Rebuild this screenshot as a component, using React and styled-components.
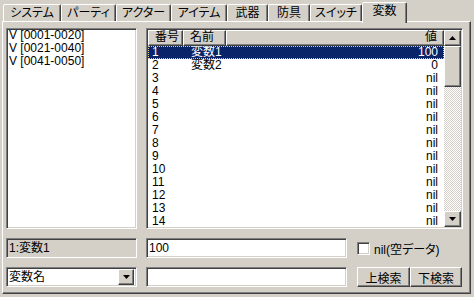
import React from 'react';
import styled, { createGlobalStyle, css } from 'styled-components';

const FACE = '#d4d0c8';

const GlobalStyle = createGlobalStyle`
  html, body { margin: 0; padding: 0; background: ${FACE}; }
  body {
    font-family: "Liberation Sans", "Noto Sans CJK JP", sans-serif;
    font-size: 12px;
    color: #000;
    font-feature-settings: "palt";
  }
  * { box-sizing: border-box; }
`;

const sunken = css`
  border: 1px solid;
  border-color: #808080 #ffffff #ffffff #808080;
  box-shadow: inset 1px 1px 0 #404040, inset -1px -1px 0 ${FACE};
`;

const raised = css`
  border: 1px solid;
  border-color: #ffffff #404040 #404040 #ffffff;
  box-shadow: inset -1px -1px 0 #808080;
  background: ${FACE};
`;

const Window = styled.div`
  width: 474px;
  height: 297px;
  padding: 0 3px 3px 2px;
  background: ${FACE};
  display: flex;
  flex-direction: column;
  overflow: hidden;
`;

const TabStrip = styled.div`
  display: flex;
  align-items: flex-end;
  height: 21px;
  padding-left: 1px;
  flex: none;
`;

const Tab = styled.div`
  width: ${(p) => p.$w}px;
  height: ${(p) => (p.$selected ? 21 : 17)}px;
  margin-bottom: ${(p) => (p.$selected ? -2 : 0)}px;
  border: 1px solid;
  border-bottom: none;
  border-color: #ffffff #404040 transparent #ffffff;
  border-radius: 2px 2px 0 0;
  box-shadow: inset -1px 0 0 #808080;
  background: ${FACE};
  display: flex;
  justify-content: center;
  padding-top: 2px;
  line-height: 13px;
  white-space: nowrap;
  ${(p) => p.$selected && css`position: relative; z-index: 1;`}
`;

const Panel = styled.div`
  flex: 1;
  border: 1px solid;
  border-color: #ffffff #404040 #404040 #ffffff;
  box-shadow: inset -1px -1px 0 #808080;
  display: grid;
  grid-template-columns: 131px 317px;
  grid-template-rows: 201px 20px 20px;
  column-gap: 9px;
  row-gap: 9px;
  padding: 6px 7px 6px 3px;
`;

const ListBox = styled.div`
  ${sunken};
  background: #fff;
  padding: 0 2px;
  line-height: 13px;
  overflow: hidden;
`;

const ListItem = styled.div`
  height: 13px;
  white-space: nowrap;
`;

const ListView = styled.div`
  ${sunken};
  background: #fff;
  padding: 1px;
  display: flex;
  overflow: hidden;
`;

const ViewBody = styled.div`
  flex: 1;
  display: flex;
  flex-direction: column;
  overflow: hidden;
`;

const HeaderRow = styled.div`
  display: flex;
  height: 16px;
  flex: none;
`;

const HeaderCell = styled.div`
  ${raised};
  width: ${(p) => p.$w}px;
  padding: 0 6px;
  line-height: 13px;
  text-align: ${(p) => p.$align || 'left'};
  white-space: nowrap;
`;

const Row = styled.div`
  display: flex;
  height: 13px;
  line-height: 13px;
  flex: none;
  white-space: nowrap;
  ${(p) =>
    p.$selected &&
    css`
      background: #0a246a;
      color: #fff;
      outline: 1px dotted #e8cf7a;
      outline-offset: -1px;
    `}
`;

const Cell = styled.div`
  width: ${(p) => p.$w}px;
  padding-left: ${(p) => p.$pl || 0}px;
  padding-right: ${(p) => p.$pr || 0}px;
  text-align: ${(p) => p.$align || 'left'};
  overflow: hidden;
`;

const ScrollBar = styled.div`
  width: 17px;
  flex: none;
  display: flex;
  flex-direction: column;
`;

const ScrollButton = styled.div`
  ${raised};
  height: ${(p) => p.$h || 16}px;
  flex: none;
  display: flex;
  align-items: center;
  justify-content: center;
`;

const Track = styled.div`
  flex: 1;
  background-color: #fff;
  background-image: repeating-conic-gradient(${FACE} 0 25%, #ffffff 0 50%);
  background-size: 2px 2px;
`;

const FieldRow = styled.div`
  display: flex;
  align-items: center;
  gap: 10px;
`;

const TextField = styled.div`
  ${sunken};
  width: ${(p) => p.$w || 131}px;
  height: 20px;
  background: ${(p) => (p.$readonly ? FACE : '#fff')};
  padding: 0 2px;
  line-height: 18px;
  white-space: nowrap;
  flex: none;
`;

const Combo = styled.div`
  ${sunken};
  width: 131px;
  height: 20px;
  background: #fff;
  padding: 2px;
  display: flex;
  align-items: center;
  justify-content: space-between;
  line-height: 16px;
`;

const ComboButton = styled.div`
  ${raised};
  width: 16px;
  height: 16px;
  display: flex;
  align-items: center;
  justify-content: center;
`;

const CheckLabel = styled.label`
  display: flex;
  align-items: center;
  gap: 4px;
  white-space: nowrap;
`;

const CheckBox = styled.span`
  ${sunken};
  width: 13px;
  height: 13px;
  background: #fff;
  display: inline-block;
`;

const ButtonGroup = styled.div`
  display: flex;
`;

const Button = styled.div`
  ${raised};
  width: ${(p) => p.$w}px;
  height: 20px;
  display: flex;
  align-items: center;
  justify-content: center;
  white-space: nowrap;
`;

const Arrow = ({ down }) => (
  <svg width="7" height="4" viewBox="0 0 7 4" style={{ display: 'block' }}>
    {down ? (
      <polygon points="0,0 7,0 3.5,4" fill="#000" />
    ) : (
      <polygon points="0,4 7,4 3.5,0" fill="#000" />
    )}
  </svg>
);

const tabs = [
  ['システム', 58],
  ['パーティ', 55],
  ['アクター', 55],
  ['アイテム', 56],
  ['武器', 41],
  ['防具', 42],
  ['スイッチ', 52],
  ['変数', 45],
];

const rows = Array.from({ length: 14 }, (_, i) => {
  const n = i + 1;
  if (n === 1) return [n, '変数1', '100'];
  if (n === 2) return [n, '変数2', '0'];
  return [n, '', 'nil'];
});

export default function App() {
  return (
    <>
      <GlobalStyle />
      <Window>
        <TabStrip>
          {tabs.map(([t, w]) => (
            <Tab key={t} $w={w} $selected={t === '変数'}>
              {t}
            </Tab>
          ))}
        </TabStrip>
        <Panel>
          <ListBox>
            <ListItem>V [0001-0020]</ListItem>
            <ListItem>V [0021-0040]</ListItem>
            <ListItem>V [0041-0050]</ListItem>
          </ListBox>
          <ListView>
            <ViewBody>
              <HeaderRow>
                <HeaderCell $w={35}>番号</HeaderCell>
                <HeaderCell $w={43}>名前</HeaderCell>
                <HeaderCell $w={218} $align="right">値</HeaderCell>
              </HeaderRow>
              {rows.map(([n, name, v]) => (
                <Row key={n} $selected={n === 1}>
                  <Cell $w={35} $pl={4}>{n}</Cell>
                  <Cell $w={43} $pl={8}>{name}</Cell>
                  <Cell $w={218} $pr={6} $align="right">{v}</Cell>
                </Row>
              ))}
            </ViewBody>
            <ScrollBar>
              <ScrollButton>
                <Arrow />
              </ScrollButton>
              <ScrollButton $h={41} />
              <Track />
              <ScrollButton>
                <Arrow down />
              </ScrollButton>
            </ScrollBar>
          </ListView>
          <TextField $readonly>1:変数1</TextField>
          <FieldRow>
            <TextField $w={201}>100</TextField>
            <CheckLabel>
              <CheckBox />
              nil(空データ)
            </CheckLabel>
          </FieldRow>
          <Combo>
            <span>変数名</span>
            <ComboButton>
              <Arrow down />
            </ComboButton>
          </Combo>
          <FieldRow>
            <TextField $w={201} />
            <ButtonGroup>
              <Button $w={53}>上検索</Button>
              <Button $w={52}>下検索</Button>
            </ButtonGroup>
          </FieldRow>
        </Panel>
      </Window>
    </>
  );
}
